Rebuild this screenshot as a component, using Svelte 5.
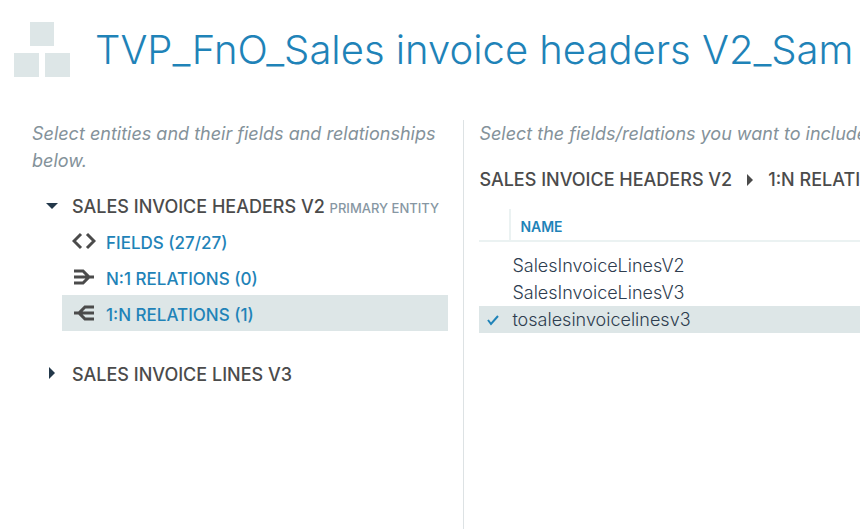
<script>
  let expanded = $state(true);
  let linesExpanded = $state(false);
  let active = $state('one-to-many');

  const sections = [
    { id: 'fields', label: 'Fields (27/27)' },
    { id: 'many-to-one', label: 'N:1 Relations (0)' },
    { id: 'one-to-many', label: '1:N Relations (1)' }
  ];

  let relations = $state([
    { name: 'SalesInvoiceLinesV2', selected: false },
    { name: 'SalesInvoiceLinesV3', selected: false },
    { name: 'tosalesinvoicelinesv3', selected: true }
  ]);
</script>

<header>
  <svg class="logo" viewBox="0 0 56 56" aria-hidden="true">
    <rect x="16" y="0" width="24" height="24" />
    <rect x="0" y="31" width="25" height="24" />
    <rect x="31" y="31" width="25" height="24" />
  </svg>
  <h1>TVP_FnO_Sales invoice headers V2_Sam</h1>
</header>

<main>
  <section class="entities">
    <p class="hint">Select entities and their fields and relationships below.</p>

    <div class="entity">
      <button class="entity-name" aria-expanded={expanded} onclick={() => (expanded = !expanded)}>
        <svg class="arrow" class:open={expanded} viewBox="0 0 12 12" aria-hidden="true"><path d="M3 0L9 6L3 12Z" /></svg>
        <span>Sales invoice headers V2 <small>Primary entity</small></span>
      </button>
      {#if expanded}
        <ul>
          {#each sections as section}
            <li>
              <button class="section" class:active={active === section.id} onclick={() => (active = section.id)}>
                <svg class="icon" viewBox="0 -1 24 20" aria-hidden="true">
                  {#if section.id === 'fields'}
                    <path d="M9 2L2 9L9 16M15 2L22 9L15 16" />
                  {:else if section.id === 'many-to-one'}
                    <path d="M2 3H11L17 9L11 15H2M2 9H22" />
                  {:else}
                    <path d="M22 3H13L7 9L13 15H22M2 9H22" />
                  {/if}
                </svg>
                <span>{section.label}</span>
              </button>
            </li>
          {/each}
        </ul>
      {/if}
    </div>

    <div class="entity">
      <button class="entity-name" aria-expanded={linesExpanded} onclick={() => (linesExpanded = !linesExpanded)}>
        <svg class="arrow" class:open={linesExpanded} viewBox="0 0 12 12" aria-hidden="true"><path d="M3 0L9 6L3 12Z" /></svg>
        <span>Sales invoice lines V3</span>
      </button>
    </div>
  </section>

  <section class="details">
    <p class="hint">Select the fields/relations you want to include.</p>

    <nav class="crumbs" aria-label="Breadcrumb">
      <span>Sales invoice headers V2</span>
      <svg class="crumb-arrow" viewBox="0 0 12 12" aria-hidden="true"><path d="M3 0L9 6L3 12Z" /></svg>
      <span>1:N Relations</span>
    </nav>

    <table>
      <thead>
        <tr>
          <td></td>
          <th>Name</th>
        </tr>
      </thead>
      <tbody>
        {#each relations as relation, i}
          <tr class:selected={relation.selected}>
            <td class="tick">
              <input type="checkbox" id="relation-{i}" bind:checked={relation.selected} />
              {#if relation.selected}
                <svg viewBox="0 0 12 12" aria-hidden="true"><path d="M1 6L4 10L11 2" /></svg>
              {/if}
            </td>
            <td><label for="relation-{i}">{relation.name}</label></td>
          </tr>
        {/each}
      </tbody>
    </table>
  </section>
</main>

<style>
  :global(body) {
    background: #fff;
    overflow: hidden;
  }
  :global(#app) {
    display: flex;
    flex-direction: column;
    min-height: 100vh;
    font-family: Inter, "Liberation Sans", sans-serif;
    font-size: 18px;
    line-height: 27px;
    color: #2e3d4f;
  }
  header {
    display: flex;
    align-items: center;
    gap: 25px;
    padding: 20px 0 40px 14px;
    white-space: nowrap;
    overflow: hidden;
  }
  .logo {
    flex: none;
    width: 56px;
    height: 56px;
    fill: #dde6e7;
  }
  h1 {
    margin: 0;
    font-size: 40px;
    line-height: 60px;
    font-weight: 300;
    color: #1f83b8;
  }
  main {
    flex: 1;
    display: flex;
  }
  .entities {
    box-sizing: border-box;
    flex: 0 0 54%;
    padding: 0 15px 0 32px;
    border-right: 1px solid #dde2e4;
  }
  .details {
    flex: 1;
    min-width: 0;
    padding-left: 15px;
    white-space: nowrap;
    overflow: hidden;
  }
  .hint {
    margin: 0 0 14px;
    font-style: italic;
    font-weight: 400;
    color: #84929a;
  }
  button {
    display: flex;
    align-items: center;
    width: 100%;
    height: 36px;
    padding: 0;
    border: none;
    background: none;
    font: inherit;
    font-weight: 500;
    text-transform: uppercase;
    text-align: left;
    cursor: pointer;
  }
  .entity {
    margin-bottom: 24px;
  }
  .entity-name {
    gap: 14px;
    height: 35px;
    padding-left: 14px;
    color: #4b4b4b;
    white-space: nowrap;
  }
  .entity-name span {
    padding-top: 3px;
  }
  small {
    font-size: 13px;
    color: #8797a3;
  }
  .arrow {
    width: 12px;
    height: 12px;
    fill: #23384a;
  }
  .arrow.open {
    transform: rotate(90deg);
  }
  ul {
    margin: 0;
    padding: 0 0 0 30px;
    list-style: none;
  }
  .section {
    gap: 10px;
    padding-left: 10px;
    font-size: 17px;
    color: #1f83b8;
  }
  .section span {
    padding-top: 4px;
  }
  .section.active {
    background: #dde6e7;
  }
  .icon {
    width: 24px;
    height: 20px;
    fill: none;
    stroke: #4b4b4b;
    stroke-width: 3;
  }
  .crumbs {
    display: flex;
    align-items: center;
    gap: 12px;
    margin-top: 19px;
    font-weight: 500;
    text-transform: uppercase;
    color: #4b4b4b;
  }
  .crumb-arrow {
    flex: none;
    width: 12px;
    height: 12px;
    fill: #4b4b4b;
  }
  table {
    width: 100%;
    margin-top: 16px;
    border-collapse: separate;
    border-spacing: 0;
  }
  td,
  th {
    padding: 0;
    text-align: left;
    font-weight: 300;
  }
  thead td,
  thead th {
    height: 30px;
    border-bottom: 2px solid #ebf2f2;
  }
  thead td {
    width: 30px;
    border-right: 2px solid #ebf2f2;
  }
  thead th {
    padding: 4px 0 0 9px;
    box-sizing: border-box;
    font-size: 14px;
    font-weight: 600;
    text-transform: uppercase;
    color: #1f83b8;
  }
  tbody::before {
    content: "";
    display: block;
    height: 10px;
  }
  tbody tr.selected {
    background: #dde6e7;
  }
  tbody label {
    padding-left: 1px;
  }
  .tick {
    position: relative;
  }
  .tick input {
    position: absolute;
    inset: 0;
    margin: 0;
    appearance: none;
    cursor: pointer;
  }
  .tick svg {
    display: block;
    width: 12px;
    height: 12px;
    margin-left: 8px;
    fill: none;
    stroke: #1f83b8;
    stroke-width: 2;
  }
</style>
